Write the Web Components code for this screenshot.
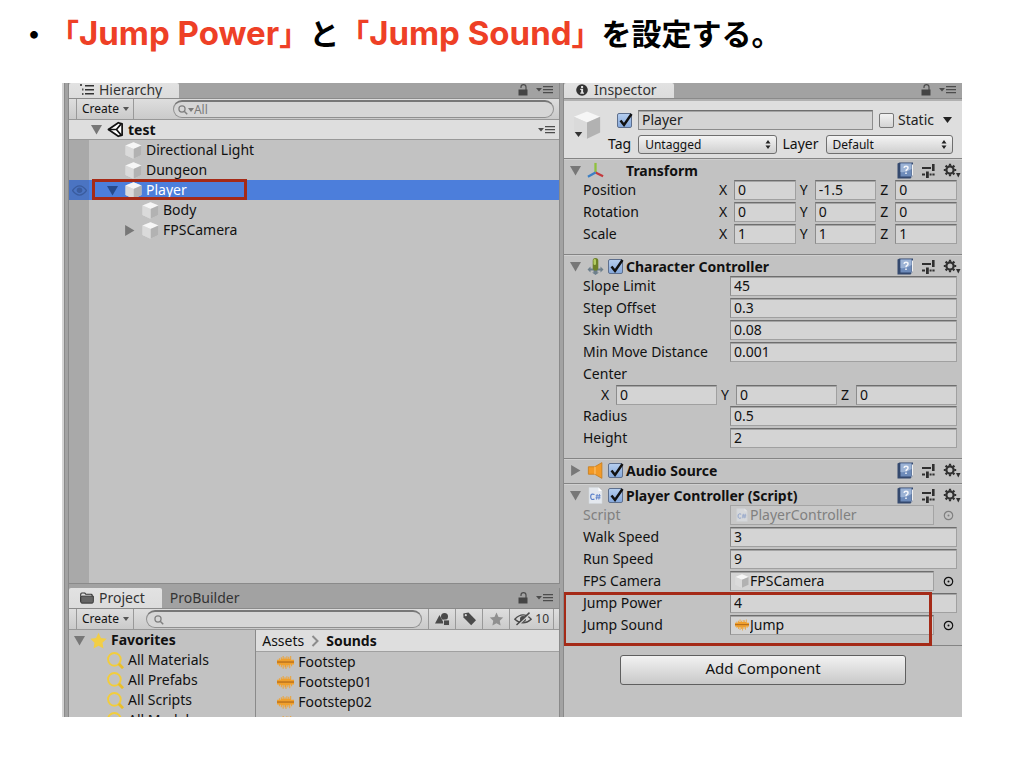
<!DOCTYPE html>
<html lang="ja">
<head>
<meta charset="utf-8">
<meta name="viewport" content="width=device-width, initial-scale=1">
<title>Jump Power と Jump Sound の設定</title>
<style>
  html, body { margin: 0; height: 100%; background: #fff; }
</style>
</head>
<body>
<lesson-slide></lesson-slide>

<script>
const ICONS = {
  cube: ['0 0 16 16', '<path d="M8 .3 15.500 3.300v9L8 15.800.5 12.300v-9z" fill="#dcdcdc"/><path d="M.5 3.300 8 .3l7.500 3L8 6.600z" fill="#f6f6f6"/><path d="M8 6.600v9.200l7.500-3.500v-9z" fill="#b2b2b2"/><path d="M8 6.600v9.200L.5 12.300v-9z" fill="#dadada"/>'],
  down: ['0 0 10 10', '<path d="M0 1h10L5 9.500z" fill="currentColor"/>'],
  right: ['0 0 10 10', '<path d="M1 0v10l8.500-5z" fill="currentColor"/>'],
  caret: ['0 0 6 4', '<path d="M0 0h6L3 4z" fill="currentColor"/>'],
  list: ['0 0 14 12', '<g fill="#333"><path d="M0 0h2v2H0zM2 4.500h1.500v2H2zM2 9h1.500v2H2z" opacity=".8"/><path d="M5 1h9v1.500H5zM5 5h9v1.500H5zM5 9h9v1.500H5z"/></g>'],
  info: ['0 0 13 13', '<circle cx="6.500" cy="6.500" r="6.300" fill="#333"/><path d="M5.500 2.200h2.200v2H5.500zM4.600 5.200h3.100v4h1v1.300H4.600V9.200h1V6.500h-1z" fill="#e4e4e4"/>'],
  folder: ['0 0 15 12', '<path d="M.8 10V2q0-1.300 1.200-1.300h3.200l1 1.300H12q1 0 1 1v1.500" fill="none" stroke="#333" stroke-width="1.200"/><path d="M2 4h12.300v6q0 1.500-1.300 1.500H2Q.8 11.500.8 10V5.500z" fill="#666" stroke="#333"/>'],
  lock: ['0 0 10 12', '<path d="M3 4V3q0-2.400 2.500-2.400T8 3v3" fill="none" stroke="#4c4c4c" stroke-width="1.200"/><rect x=".5" y="5.500" width="9" height="6" fill="#444"/>'],
  menu: ['0 0 17 10', '<path d="M0 3h6L3 6.500z" fill="#4c4c4c"/><path d="M7 1h10v1.300H7zM7 4h10v1.300H7zM7 7h10v1.300H7z" fill="#4c4c4c"/>'],
  unity: ['0 0 18 18', '<path d="M1.500 9 12 1.800 16 3v12l-4 1.200z" fill="#fff" stroke="#111" stroke-width="1.800" stroke-linejoin="round"/><path d="M1.500 9H10M10 9l5-6M10 9l5 6" fill="none" stroke="#111" stroke-width="1.800"/>'],
  search: ['0 0 12 12', '<circle cx="4.800" cy="4.800" r="3.700" fill="none" stroke="#808080" stroke-width="1.500"/><path d="m7.500 7.500 3.600 3.600" stroke="#808080" stroke-width="1.800"/>'],
  eye: ['0 0 14 10', '<path d="M.5 5Q7-3.500 13.500 5 7 13.500.500 5z" fill="none" stroke="currentColor" stroke-width="1.200"/><circle cx="7" cy="4.800" r="2.600" fill="currentColor"/>'],
  axes: ['0 0 18 16', '<path d="M9 10V0" stroke="#8fc23c" stroke-width="2.400"/><path d="m9 10 8 4" stroke="#c4393c" stroke-width="2.400"/><path d="m9 10-8 4.500" stroke="#3c7fc4" stroke-width="2.400"/>'],
  book: ['0 0 17 17', '<path d="M.5 1.500 2.500.5h13.500v13L13.500 16.500H.5z" fill="#34496e"/><path d="m13.800 15.800 2.200-2.500V2.500h-1.200v11z" fill="#f2f2f2"/><path d="M3.500 1.500h11v13h-11z" fill="#6d8bba"/><path d="M3.500 1.500h11V7q-5 4-11 3z" fill="#9cb3d5"/><path d="M7 5.800Q7.200 4.300 9 4.300q2 0 2 1.600 0 1-1 1.600-1 .5-1 1.700M9 10.600V12" stroke="#f5f7fb" stroke-width="1.500" fill="none"/>'],
  sliders: ['0 0 15 14', '<g fill="#2f2f2f"><path d="M1 3h9v2H1zM11 0h2.600v7H11zM1 9.500h3v2H1zM5 7.500h2.800V14H5zM8.600 9.500h2v2h-2zM11.400 9.500h2.200v2h-2.200z"/></g>'],
  gear: ['0 0 18 15', '<circle cx="7" cy="7" r="3.600" fill="none" stroke="#2f2f2f" stroke-width="2.200"/><path d="M7 .8v2M7 11.200v2M.8 7h2M11.200 7h2M2.600 2.600 4 4M10 10l1.400 1.400M11.400 2.600 10 4M4 10l-1.400 1.400" stroke="#2f2f2f" stroke-width="2.200"/><path d="M13 10h4.500l-2.200 4.500z" fill="#2f2f2f"/>'],
  capsule: ['0 0 16 17', '<path d="M0 11.500 3 8.500v2h10v-2l3 3-3 3v-2h-3v2h1.500L8 17l-3.500-2.500H6v-2H3v2z" fill="#6d7f8c"/><rect x="5.200" y="0" width="5.600" height="12.500" rx="2.800" fill="#6d8128"/><rect x="6" y="1" width="2.500" height="6" rx="1.200" fill="#b3cc63"/>'],
  speaker: ['0 0 15 16', '<path d="M.8 4.500h6L13.500.600v14.800L6.800 11.500h-6z" fill="#f39a26" stroke="#c77d1e" stroke-width=".8"/><path d="M7 4.500v7" stroke="#ffc676"/>'],
  script: ['0 0 14 17', '<path d="M.5.5h9.500l3.500 3.500v12.500H.5z" fill="#e4e8ee" stroke="#d2d6dc" stroke-width=".6"/><path d="M10 .5V4h3.500z" fill="#fff"/><path d="M6 7.500q-3.800-1.500-3.800 2.300T6 12" fill="none" stroke="#5b80ca" stroke-width="1.200"/><path d="M8.700 7 8 12.500M11 7l-.7 5.500M7.200 8.800h5M7 10.800h5" stroke="#5b80ca" stroke-width=".9"/>'],
  wave: ['0 0 18 14', '<path d="M0 4h2V2.500h1V4h1V1.500h1V3h1V0h1v3h1V1.500h1V3h1V.500h1V3h1V1h1v2h1V0h1v4h3v5h-2v2h-1V9h-1v4h-1v-3h-1v2h-1v-2h-1v4h-1v-4H9v2H8v-2H7v3.500H6V10H5v2H4V9.500H3V11H2V9H0z" fill="#f0a02c"/><path d="M0 6.500h18" stroke="#b06a1c" stroke-width="1.300"/>'],
  star: ['0 0 18 18', '<path d="m9 .8 2.600 5.600 6 .8-4.400 4.200 1.100 6L9 14.500l-5.300 2.900 1.100-6L.4 7.200l6-.8z" fill="currentColor"/>'],
  find: ['0 0 18 18', '<circle cx="7.800" cy="7.800" r="6.700" fill="none" stroke="#f2cd3c" stroke-width="2"/><path d="m12.500 12.500 4.500 4.700" stroke="#e8bd2c" stroke-width="3"/>'],
  shapes: ['0 0 15 13', '<circle cx="9.500" cy="4" r="3.500" fill="#4a4a4a"/><path d="m4.500 2.500 4.500 8.500H0z" fill="#4a4a4a"/><path d="M8.500 7.500h6V13h-6z" fill="#4a4a4a" stroke="#d8d8d8" stroke-width=".8"/>'],
  tag: ['0 0 14 14', '<path d="M.8 1.500 6 .5l7.500 7.800-4.800 5L1 5.500z" fill="#4a4a4a"/><circle cx="3.300" cy="3.200" r="1.100" fill="#d8d8d8"/>'],
  hidden: ['0 0 18 14', '<path d="M.8 7.200Q9-1.500 17.200 7.200 9 14.500.8 7.200z" fill="none" stroke="#4a4a4a" stroke-width="1.300"/><circle cx="9" cy="7" r="3" fill="#4a4a4a"/><path d="M3 14 16 2" stroke="#d4d4d4" stroke-width="1.500"/><path d="M2.500 13 15.500 .6" stroke="#4a4a4a" stroke-width="1.500"/>'],
  chevron: ['0 0 8 12', '<path d="m1.500 1 5 5-5 5" fill="none" stroke="#8c8c8c" stroke-width="2"/>'],
  target: ['0 0 11 11', '<circle cx="5.500" cy="5.500" r="4.200" fill="none" stroke="currentColor" stroke-width="1.200"/><circle cx="5.500" cy="5.500" r="1" fill="currentColor"/>'],
  tick: ['0 0 16 16', '<path d="M3.500 8.500 7 13 14.500 2" fill="none" stroke="#111" stroke-width="2.500"/>'],
  updown: ['0 0 6 9', '<path d="M3 0 5.500 3.500h-5zM3 9 .5 5.500h5z" fill="#222"/>']
};

const BASE = `
  *, *::before, *::after { box-sizing: border-box; }
  :host { box-sizing: border-box; }
  input, select, button { font: inherit; color: inherit; margin: 0; border-radius: 0; outline: 0; }
`;

let serial = 0;
class Base extends HTMLElement {
  constructor() {
    super();
    this.attachShadow({ mode: 'open' });
  }
  connectedCallback() {
    this.uid = 'c' + (++serial);
    this.shadowRoot.innerHTML = `<style>${BASE}${this.styles()}</style>${this.render()}`;
  }
  at(name, fallback = '') { return this.getAttribute(name) ?? fallback; }
  styles() { return ''; }
  render() { return '<slot></slot>'; }
}
const define = (name, cls) => customElements.define(name, cls);

/* An inline icon; w and h give its box. */
define('ui-icon', class extends Base {
  styles() {
    return `:host { display: inline-flex; flex: none; width: ${this.at('w', '16')}px; height: ${this.at('h', '16')}px; }
      svg { display: block; width: 100%; height: 100%; }`;
  }
  render() {
    const [box, body] = ICONS[this.at('name')];
    return `<svg viewBox="${box}" aria-hidden="true">${body}</svg>`;
  }
});

define('ui-check', class extends Base {
  styles() {
    return `:host { display: inline-flex; flex: none; position: relative; width: 15px; height: 15px; }
      input { appearance: none; width: 15px; height: 15px; border: 1px solid #777; border-radius: 2px; background: linear-gradient(#f2f2f2, #d4d4d4); }
      input:checked { background: linear-gradient(#b4cdee, #86a9dc); border-color: #5d6f8d; }
      ui-icon { position: absolute; left: 0; top: -1px; pointer-events: none; display: none; }
      input:checked + ui-icon { display: flex; }`;
  }
  render() {
    return `<input type="checkbox" aria-label="${this.at('label')}" ${this.hasAttribute('checked') ? 'checked' : ''}><ui-icon name="tick"></ui-icon>`;
  }
});

define('ui-popup', class extends Base {
  styles() {
    return `:host { display: flex; position: relative; height: 19px; min-width: 0; }
      select { appearance: none; width: 100%; height: 19px; padding: 0 16px 0 6px; font-size: 12px; border: 1px solid #6f6f6f; border-radius: 3px; background: linear-gradient(#f4f4f4, #cfcfcf); }
      ui-icon { position: absolute; right: 6px; top: 5px; pointer-events: none; }`;
  }
  render() {
    return `<select aria-label="${this.at('label')}"><option>${this.at('value')}</option></select><ui-icon name="updown" w="6" h="9"></ui-icon>`;
  }
});

/* Text field look shared by every editable value. */
const FIELD = `
  input { display: block; width: 100%; min-width: 0; height: 20px; padding: 0 3px 1px; border: 1px solid #a0a0a0; border-top-color: #6e6e6e; border-left-color: #8c8c8c; box-shadow: inset 0 1px #a4a4a4; background: #d4d4d4; }
`;
define('ui-axes', class extends Base {
  styles() {
    return `:host { display: grid; grid-template-columns: repeat(3, 1fr); gap: 4px; min-width: 0; }
      div { display: flex; align-items: center; min-width: 0; }
      label { flex: none; width: 15px; }
      ${FIELD}`;
  }
  render() {
    const v = this.at('values').split(',');
    return ['X', 'Y', 'Z'].map((a, i) =>
      `<div><label for="${this.uid}${a}">${a}</label><input id="${this.uid}${a}" value="${v[i]}"></div>`).join('');
  }
});

define('prop-row', class extends Base {
  styles() {
    return `:host { display: flex; align-items: center; height: 22px; padding: 0 5px 0 19px; }
      :host([kind="nested"]) { height: 20px; padding-left: 37px; }
      :host([disabled]) { color: #808080; }
      .name { flex: 0 0 147px; white-space: nowrap; }
      :host([kind="vector"]) .name { flex-basis: 136px; }
      ui-axes { flex: 1; }
      ${FIELD}
      .ref { flex: 1; display: flex; align-items: center; min-width: 0; height: 20px; padding-left: 4px; border: 1px solid #a0a0a0; border-top-color: #6e6e6e; border-left-color: #8c8c8c; box-shadow: inset 0 1px #a4a4a4; background: #d4d4d4; }
      .ref input { border: 0; box-shadow: none; height: 18px; padding: 0 0 1px 1px; background: none; }
      :host([disabled]) .ref { background: #c8c8c8; border-color: #a4a4a4; box-shadow: none; }
      :host([disabled]) .ref ui-icon { opacity: .5; }
      button { flex: none; display: flex; margin: 0 3px 0 9px; padding: 0; border: 0; background: none; color: inherit; }`;
  }
  render() {
    const kind = this.at('kind', 'text'), id = this.uid, label = this.at('label'), value = this.at('value');
    if (kind === 'label') return `<span class="name">${label}</span>`;
    if (kind === 'nested') return `<ui-axes values="${value}"></ui-axes>`;
    if (kind === 'vector') return `<span class="name">${label}</span><ui-axes values="${value}"></ui-axes>`;
    const name = `<label class="name" for="${id}">${label}</label>`;
    if (kind === 'object') return `${name}<span class="ref"><ui-icon name="${this.at('icon')}" w="14" h="14"></ui-icon><input id="${id}" value="${value}" readonly></span><button aria-label="Select ${label}"><ui-icon name="target" w="11" h="11"></ui-icon></button>`;
    return `${name}<input id="${id}" value="${value}">`;
  }
});

define('component-section', class extends Base {
  styles() {
    return `:host { display: block; padding-bottom: 9px; border-top: 1px solid #848484; box-shadow: inset 0 1px #d0d0d0; }
      :host([collapsed]) { padding-bottom: 4px; }
      header { display: grid; grid-template-columns: 12px 18px 15px 1fr auto; column-gap: 4px; align-items: center; height: 20px; padding: 3px 1px 0 6px; }
      h2 { margin: 0 0 0 -1px; font-size: 14px; font-weight: 700; line-height: 17px; white-space: nowrap; }
      button { display: flex; padding: 0; border: 0; background: none; }
      .fold { color: #777; }
      header > ui-icon { justify-self: center; }
      .tools { display: flex; align-items: center; gap: 7px; }`;
  }
  render() {
    const t = this.at('title');
    return `<header><button class="fold" aria-label="Fold ${t}"><ui-icon name="${this.hasAttribute('collapsed') ? 'right' : 'down'}" w="11" h="11"></ui-icon></button>
      <ui-icon name="${this.at('icon')}" w="17" h="17"></ui-icon>
      ${this.hasAttribute('toggle') ? `<ui-check checked label="${t}"></ui-check>` : '<span></span>'}
      <h2>${t}</h2>
      <div class="tools"><button aria-label="Help"><ui-icon name="book" w="17" h="17"></ui-icon></button><button aria-label="Presets"><ui-icon name="sliders" w="15" h="14"></ui-icon></button><button aria-label="Settings"><ui-icon name="gear" w="18" h="15"></ui-icon></button></div>
    </header><slot></slot>`;
  }
});

/* Frame drawn over its content to draw the reader's attention. */
define('marked-area', class extends Base {
  styles() {
    return `:host { display: block; position: relative; }
      i { position: absolute; inset: 0 30px -10px -1px; border: 3px solid #a52a17; pointer-events: none; }`;
  }
  render() { return '<slot></slot><i></i>'; }
});

define('tab-bar', class extends Base {
  styles() {
    return `:host { display: flex; align-items: flex-end; flex: none; height: 16px; overflow: hidden; background: #a2a2a2; border-bottom: 1px solid #8a8a8a; color: #333; }
      :host([tall]) { height: 21px; }
      button { display: flex; align-items: center; gap: 5px; height: 20px; padding: 0 17px 0 11px; border: 0; background: none; white-space: nowrap; }
      :host(:not([tall])) button { height: 15px; padding-bottom: 2px; line-height: 13px; }
      button.on { background: linear-gradient(#e2e2e2, #dcdcdc); border-radius: 2px 2px 0 0; }
      button:not(.on) { padding-left: 8px; }
      .end { display: flex; gap: 8px; align-items: center; align-self: center; margin-left: auto; padding-right: 6px; }
      :host(:not([tall])) .end { padding-bottom: 2px; }`;
  }
  render() {
    const [first, ...rest] = this.at('tabs').split(',');
    return `<button class="on"><ui-icon name="${this.at('icon')}" w="14" h="12"></ui-icon>${first}</button>${rest.map(t => `<button>${t}</button>`).join('')}
      <span class="end"><ui-icon name="lock" w="10" h="12"></ui-icon><ui-icon name="menu" w="17" h="10"></ui-icon></span>`;
  }
});

define('panel-tools', class extends Base {
  styles() {
    return `:host { display: flex; align-items: center; flex: none; height: 21px; padding: 0 5px 0 7px; background: linear-gradient(#dedede, #cacaca); border-bottom: 1px solid #989898; font-size: 12px; }
      .create { display: flex; align-items: center; gap: 4px; height: 20px; padding: 0 4px 0 5px; border: 0; border-left: 1px solid #999; border-right: 1px solid #999; background: none; }
      .create ui-icon { color: #555; }
      .search { flex: 1; display: flex; align-items: center; min-width: 0; height: 18px; margin-left: 12px; padding-left: 7px; border: 1px solid #909090; border-top: 2px solid #777; border-radius: 9px; background: #d6d6d6; color: #7a7a7a; }
      :host([mode]) .search { margin-left: 39px; padding-left: 4px; }
      input { flex: 1; min-width: 0; height: 15px; padding: 0; border: 0; background: none; }
      slot { display: contents; }`;
  }
  render() {
    const h = this.hasAttribute('mode');
    return `<button class="create">Create <ui-icon name="caret" w="6" h="4"></ui-icon></button>
      <label class="search"><ui-icon name="search" w="10" h="10"></ui-icon>${h ? '<ui-icon name="caret" w="6" h="4"></ui-icon>' : ''}<input aria-label="Search" value="${this.at('value')}"></label><slot></slot>`;
  }
});

define('tool-button', class extends Base {
  styles() {
    return `:host { display: block; flex: none; }
      button { display: flex; align-items: center; justify-content: center; gap: 3px; min-width: 27px; height: 20px; padding: 0 4px; border: 0; border-left: 1px solid #999; background: none; color: #333; }
      :host([muted]) ui-icon { color: #909090; }
      :host([last]) button { border-right: 1px solid #999; }
      :host([first]) { margin-left: 6px; }`;
  }
  render() {
    return `<button aria-label="${this.at('label')}"><ui-icon name="${this.at('icon')}" w="${this.at('w', '15')}" h="14"></ui-icon><slot></slot></button>`;
  }
});

/* One line of a tree or list: optional fold arrow, icon, text. */
define('tree-row', class extends Base {
  styles() {
    return `:host { display: flex; align-items: center; flex: none; position: relative; height: 20px; padding-left: ${this.at('indent', '0')}px; white-space: nowrap; }
      :host([bold]) { font-weight: 700; }
      :host([scene]) { background: #dedede; border-bottom: 1px solid #989898; padding-right: 4px; }
      :host([selected]) { background: #4c7edb; color: #fff; }
      .fold { display: flex; flex: none; width: 11px; margin-right: 7px; color: #777; }
      :host([bold]) .fold { margin-right: 5px; }
      :host([selected]) .fold { color: #274a8c; }
      .icon { margin-right: 4px; }
      :host([star]) .icon { color: #f2ce45; }
      .menu { margin-left: auto; }
      .vis { position: absolute; left: 0; top: 0; width: 20px; height: 20px; display: flex; align-items: center; justify-content: center; background: #4b74c2; color: #3a5c9e; }
      .mark { position: absolute; left: 23px; top: -1px; width: 155px; height: 21px; border: 3px solid #a52a17; pointer-events: none; }`;
  }
  render() {
    const fold = this.at('fold'), s = this.at('size', '17');
    return `${this.hasAttribute('selected') ? '<span class="vis"><ui-icon name="eye" w="15" h="11"></ui-icon></span>' : ''}
      <span class="fold">${fold ? `<ui-icon name="${fold}" w="11" h="11"></ui-icon>` : ''}</span>
      <ui-icon class="icon" name="${this.at('icon')}" w="${s}" h="${s}"></ui-icon><span><slot></slot></span>
      ${this.hasAttribute('scene') ? '<ui-icon class="menu" name="menu" w="17" h="10"></ui-icon>' : ''}
      ${this.hasAttribute('selected') ? '<span class="mark"></span>' : ''}`;
  }
});

define('hierarchy-panel', class extends Base {
  styles() {
    return `:host { display: flex; flex-direction: column; min-height: 0; border-right: 1px solid #8a8a8a; border-bottom: 1px solid #8a8a8a; }
      .tree { flex: 1; min-height: 0; background: linear-gradient(90deg, #a9a9a9 20px, #c2c2c2 20px); }`;
  }
  render() {
    return `<tab-bar icon="list" tabs="Hierarchy"></tab-bar>
      <panel-tools mode="h" value="All"></panel-tools>
      <tree-row scene bold fold="down" icon="unity" indent="22">test</tree-row>
      <div class="tree">
        <tree-row icon="cube" indent="38">Directional Light</tree-row>
        <tree-row icon="cube" indent="38">Dungeon</tree-row>
        <tree-row icon="cube" indent="38" fold="down" selected>Player</tree-row>
        <tree-row icon="cube" indent="55">Body</tree-row>
        <tree-row icon="cube" indent="55" fold="right">FPSCamera</tree-row>
      </div>`;
  }
});

define('project-panel', class extends Base {
  styles() {
    return `:host { display: flex; flex-direction: column; min-height: 0; border-right: 1px solid #8a8a8a; }
      .body { flex: 1; display: grid; grid-template-columns: 38fr 62fr; min-height: 0; background: #c2c2c2; }
      .body > div { overflow: hidden; min-height: 0; min-width: 0; }
      .files { border-left: 1px solid #8a8a8a; }
      nav { display: flex; align-items: center; gap: 7px; height: 22px; padding-left: 6px; background: #dedede; border-bottom: 1px solid #a0a0a0; }
      nav a { color: inherit; text-decoration: none; }
      nav a:last-child { font-weight: 700; }`;
  }
  render() {
    return `<tab-bar tall icon="folder" tabs="Project,ProBuilder"></tab-bar>
      <panel-tools>
        <tool-button first icon="shapes" label="Search by type"></tool-button>
        <tool-button icon="tag" label="Search by label"></tool-button>
        <tool-button muted icon="star" label="Save search"></tool-button>
        <tool-button last icon="hidden" w="18" label="Hidden packages">10</tool-button>
      </panel-tools>
      <div class="body">
        <div>
          <tree-row bold star fold="down" icon="star" indent="5">Favorites</tree-row>
          <tree-row icon="find" indent="20">All Materials</tree-row>
          <tree-row icon="find" indent="20">All Prefabs</tree-row>
          <tree-row icon="find" indent="20">All Scripts</tree-row>
          <tree-row icon="find" indent="20">All Models</tree-row>
        </div>
        <div class="files">
          <nav><a href="#assets">Assets</a><ui-icon name="chevron" w="8" h="12"></ui-icon><a href="#sounds">Sounds</a></nav>
          <tree-row icon="wave" indent="3">Footstep</tree-row>
          <tree-row icon="wave" indent="3">Footstep01</tree-row>
          <tree-row icon="wave" indent="3">Footstep02</tree-row>
          <tree-row icon="wave" indent="3">Footstep03</tree-row>
        </div>
      </div>`;
  }
});

define('inspector-panel', class extends Base {
  styles() {
    return `:host { display: flex; flex-direction: column; min-height: 0; background: #c2c2c2; overflow: hidden; }
      .head { display: grid; grid-template-columns: 28px 1fr; padding: 7px 9px 2px; border-top: 2px solid #b0b0b0; background: #dedede; }
      .obj { position: relative; }
      .obj .c { position: absolute; left: 1px; top: 24px; color: #333; }
      .obj .big { margin-top: 3px; }
      .line { display: flex; align-items: center; height: 24px; }
      .line input { flex: 1; min-width: 0; height: 20px; margin: 0 6px; padding: 0 3px 1px; border: 1px solid #8c8c8c; border-top-color: #6e6e6e; box-shadow: inset 0 1px #a4a4a4; background: #d4d4d4; }
      .first { padding-left: 16px; color: #222; }
      .second { padding-left: 7px; }
      .static { margin: 0 8px 0 4px; }
      .second span { flex: none; margin-right: 7px; }
      .second ui-popup + span { margin-left: 6px; }
      .tagp { flex: 139; } .layp { flex: 128; }
      .add { align-self: center; width: 72%; height: 30px; margin-top: 9px; padding-bottom: 5px; border: 1px solid #5f5f5f; border-radius: 3px; background: linear-gradient(#f2f2f2, #c8c8c8); font-size: 15px; }
      .rule { flex: none; height: 1px; background: #848484; }`;
  }
  render() {
    return `<tab-bar icon="info" tabs="Inspector"></tab-bar>
      <div class="head">
        <div class="obj"><ui-icon class="big" name="cube" w="28" h="28"></ui-icon><ui-icon class="c" name="caret" w="9" h="5"></ui-icon></div>
        <div>
          <div class="line first"><ui-check checked label="Active"></ui-check><input aria-label="Name" value="Player"><ui-check label="Static"></ui-check><span class="static">Static</span><ui-icon name="caret" w="11" h="6"></ui-icon></div>
          <div class="line second"><span>Tag</span><ui-popup class="tagp" label="Tag" value="Untagged"></ui-popup><span>Layer</span><ui-popup class="layp" label="Layer" value="Default"></ui-popup></div>
        </div>
      </div>
      <component-section title="Transform" icon="axes">
        <prop-row kind="vector" label="Position" value="0,-1.5,0"></prop-row>
        <prop-row kind="vector" label="Rotation" value="0,0,0"></prop-row>
        <prop-row kind="vector" label="Scale" value="1,1,1"></prop-row>
      </component-section>
      <component-section title="Character Controller" icon="capsule" toggle>
        <prop-row label="Slope Limit" value="45"></prop-row>
        <prop-row label="Step Offset" value="0.3"></prop-row>
        <prop-row label="Skin Width" value="0.08"></prop-row>
        <prop-row label="Min Move Distance" value="0.001"></prop-row>
        <prop-row kind="label" label="Center"></prop-row>
        <prop-row kind="nested" value="0,0,0"></prop-row>
        <prop-row label="Radius" value="0.5"></prop-row>
        <prop-row label="Height" value="2"></prop-row>
      </component-section>
      <component-section title="Audio Source" icon="speaker" toggle collapsed></component-section>
      <component-section title="Player Controller (Script)" icon="script" toggle>
        <prop-row kind="object" label="Script" icon="script" value="PlayerController" disabled></prop-row>
        <prop-row label="Walk Speed" value="3"></prop-row>
        <prop-row label="Run Speed" value="9"></prop-row>
        <prop-row kind="object" label="FPS Camera" icon="cube" value="FPSCamera"></prop-row>
        <marked-area>
          <prop-row label="Jump Power" value="4"></prop-row>
          <prop-row kind="object" label="Jump Sound" icon="wave" value="Jump"></prop-row>
        </marked-area>
      </component-section>
      <div class="rule"></div>
      <button class="add">Add Component</button>`;
  }
});

define('unity-editor', class extends Base {
  styles() {
    return `:host { display: grid; grid-template-columns: 7px 491fr 4px 398fr; min-height: 0; overflow: hidden; background: #a2a2a2; color: #111; font: 14px/18px "Noto Sans", "DejaVu Sans", sans-serif; }
      .edge { background: linear-gradient(90deg, #d4d4d4 2px, #8a8a8a 2px 3px, #a2a2a2 3px 6px, #8a8a8a 6px); }
      .left { display: grid; grid-template-rows: 501fr 4px 129fr; min-height: 0; min-width: 0; }
      hierarchy-panel { grid-row: 1; } project-panel { grid-row: 3; }
      .bar { border-right: 1px solid #8a8a8a; }`;
  }
  render() {
    return `<div class="edge"></div><div class="left"><hierarchy-panel></hierarchy-panel><project-panel></project-panel></div><div class="bar"></div><inspector-panel></inspector-panel>`;
  }
});

define('slide-heading', class extends Base {
  styles() {
    return `:host { display: flex; align-items: center; flex: none; height: 83px; padding: 0 19px 18px; font: 700 30px/40px "Noto Sans CJK JP", sans-serif; color: #000; white-space: nowrap; }
      h1 { margin: 0; font: inherit; }
      .dot { width: 30px; text-align: center; }
      em { font-style: normal; color: #ee4026; }
      b { font: 650 33px/40px Inter, "Liberation Sans", sans-serif; }`;
  }
  render() {
    return `<span class="dot">・</span><h1><em>「<b>Jump Power</b>」</em>と<em>「<b>Jump Sound</b>」</em>を設定する。</h1>`;
  }
});

define('lesson-slide', class extends Base {
  styles() {
    return `:host { display: flex; flex-direction: column; height: 100vh; padding-bottom: 51px; background: #fff; }
      unity-editor { flex: 1; margin: 0 62px; }`;
  }
  render() { return '<slide-heading></slide-heading><unity-editor></unity-editor>'; }
});
</script>
</body>
</html>
